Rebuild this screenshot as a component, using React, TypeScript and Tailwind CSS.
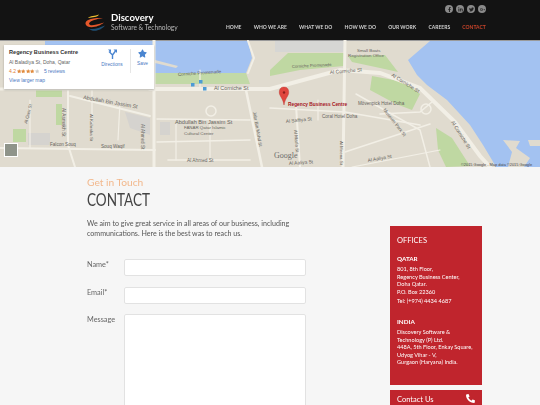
import { FaFacebookF, FaLinkedinIn, FaTwitter, FaGooglePlusG, FaPhoneAlt, FaStar } from 'react-icons/fa';

const navItems = ['HOME', 'WHO WE ARE', 'WHAT WE DO', 'HOW WE DO', 'OUR WORK', 'CAREERS'];

const mapLabels: { t: string; x: number; y: number; r?: number; s?: number }[] = [
  { t: 'Corniche Promenade', x: 178, y: 36, r: -4, s: 4.6 },
  { t: 'Al Corniche St', x: 214, y: 50, s: 5.4 },
  { t: 'Abdullah Bin Jassim St', x: 83, y: 59, r: 10, s: 5.4 },
  { t: 'Abdullah Bin Jassim St', x: 175, y: 84, s: 5.6 },
  { t: 'FANAR Qatar Islamic', x: 184, y: 89, s: 4.4 },
  { t: 'Cultural Center', x: 184, y: 95, s: 4.4 },
  { t: 'Al Asmakh St', x: 62, y: 68, r: 90, s: 4.8 },
  { t: 'Al Kahraba St', x: 90, y: 74, r: 90, s: 4.4 },
  { t: 'Al Ahmed St', x: 141, y: 84, r: 90, s: 4.6 },
  { t: 'Al Qasr St', x: 27, y: 84, r: -75, s: 4.4 },
  { t: 'Falcon Souq', x: 50, y: 106, s: 4.6 },
  { t: 'Souq Waqif', x: 101, y: 108, s: 4.6 },
  { t: 'Al Ahmed St', x: 187, y: 122, s: 4.8 },
  { t: 'Jabr Bin Mohd St', x: 253, y: 72, r: 80, s: 4.6 },
  { t: 'Small Boats', x: 357, y: 12, s: 4.4 },
  { t: 'Registration Office', x: 348, y: 17, s: 4.4 },
  { t: 'Corniche Promenade', x: 292, y: 28, r: -3, s: 4.2 },
  { t: 'Al Corniche St', x: 330, y: 34, r: -5, s: 5 },
  { t: 'Al Corniche St', x: 391, y: 36, r: 32, s: 5 },
  { t: 'Al Corniche St', x: 451, y: 82, r: 58, s: 5 },
  { t: 'Mövenpick Hotel Doha', x: 358, y: 65, s: 4.6 },
  { t: 'Coral Hotel Doha', x: 322, y: 78, s: 4.6 },
  { t: 'Museum Park St', x: 383, y: 70, r: 52, s: 4.6 },
  { t: 'Al Saffiya St', x: 286, y: 83, r: -6, s: 4.8 },
  { t: 'Al Marfa St', x: 294, y: 90, r: 85, s: 4.6 },
  { t: 'Al Meena St', x: 340, y: 101, r: 90, s: 4.4 },
  { t: 'Al Aaliya St', x: 289, y: 125, r: -4, s: 4.8 },
  { t: 'Al Aaliya St', x: 368, y: 122, r: -10, s: 4.8 },
];

function MapDrawing() {
  return (
    <svg className="block h-full w-full" viewBox="0 0 540 127" fontFamily="'Liberation Sans', sans-serif">
      <rect width="540" height="127" fill="#e0dbcf" />
      <rect width="540" height="1" fill="#9a9a9a" />
      {/* water */}
      <path d="M45 1H248L252 18 246 33H150L120 28 45 10Z" fill="#a3c2f1" />
      <path d="M155 20L178 26 176 28 155 23Z" fill="#e0dbcf" />
      <path d="M430 1L408 20 417 35 427 45 447 60 470 85 483 105 492 120 496 127H540V1Z" fill="#a3c2f1" />
      <path d="M503 100L520 101 516 108 530 118 524 127H508L512 112Z" fill="#e0dbcf" />
      <path d="M528 100H540V106H530Z" fill="#e0dbcf" />
      {/* parks */}
      <path d="M155 33H246L250 44H155Z" fill="#bfd8a2" opacity="0.9" />
      <path d="M270 30L288 13H344V26L300 30 270 36Z" fill="#bfd8a2" />
      <path d="M348 16L385 15 398 32 380 28 352 22Z" fill="#bfd8a2" />
      <path d="M372 36L404 42 420 54 412 70 396 64 370 50Z" fill="#bfd8a2" />
      <path d="M436 88L452 98 470 126 446 127 438 110Z" fill="#bfd8a2" />
      <path d="M36 49H62V57H36Z" fill="#bfd8a2" />
      <path d="M56 64H62V85H56Z" fill="#bfd8a2" />
      <path d="M13 89H26V102H13Z" fill="#bfd8a2" />
      <rect x="275" y="1" width="70" height="11" fill="#d6d6d4" />
      <rect x="28" y="93" width="22" height="12" fill="#d5d3cf" />
      <rect x="160" y="82" width="10" height="13" fill="#d5d3cf" />
      <path d="M125 72L150 78V95L130 88Z" fill="#d5d3cf" />
      {/* roads */}
      <g fill="none" stroke="#f2efe6" strokeLinecap="round">
        <path d="M150 49H270L340 30 380 33 420 48 455 82 480 116 490 127" strokeWidth="4" />
        <path d="M0 49H150" strokeWidth="3" />
        <path d="M154 0V127" strokeWidth="3" />
        <path d="M345 0L343 127" strokeWidth="3" />
        <path d="M68 50V105L75 127" strokeWidth="2" />
        <path d="M70 56L150 76" strokeWidth="2" />
        <path d="M0 108L155 110" strokeWidth="2" />
        <path d="M157 79L250 80" strokeWidth="1.6" />
        <path d="M157 102L250 100" strokeWidth="1.6" />
        <path d="M246 50L262 127" strokeWidth="2.5" />
        <path d="M168 120H250" strokeWidth="1.6" />
        <path d="M176 84V120M210 84V120" strokeWidth="1.2" />
        <path d="M270 68L345 72M345 72L420 85" strokeWidth="1.6" />
        <path d="M296 65L300 127" strokeWidth="2" />
        <path d="M318 60V80" strokeWidth="1.2" />
        <path d="M345 112L430 84" strokeWidth="1.6" />
        <path d="M352 127L440 110" strokeWidth="1.2" />
        <path d="M356 54L420 90 430 127" strokeWidth="1.5" />
        <path d="M380 74L420 72 432 62" strokeWidth="1.6" />
        <path d="M92 50V85M120 62L118 100" strokeWidth="1.2" />
        <path d="M30 60V108M200 50V30" strokeWidth="1.2" />
        <path d="M248 1L254 18 248 33" strokeWidth="2" />
      </g>
      <circle cx="426" cy="69" r="5" fill="none" stroke="#f2efe6" strokeWidth="1.5" />
      <circle cx="211" cy="71" r="5" fill="none" stroke="#f2efe6" strokeWidth="1.5" />
      {/* map labels */}
      <g fill="#66645d">
        {mapLabels.map((l) => (
          <text
            key={l.t + l.x}
            x={l.x}
            y={l.y}
            fontSize={l.s ?? 4.6}
            transform={l.r ? `rotate(${l.r} ${l.x} ${l.y})` : undefined}
          >
            {l.t}
          </text>
        ))}
      </g>
      <text x="274" y="118" fontSize="8" fill="#6c6c6c" fontFamily="'Liberation Serif', serif">
        Google
      </text>
      <text x="461" y="126" fontSize="3.9" fill="#444">
        ©2015 Google - Map data ©2015 Google
      </text>
      {/* transit squares */}
      <rect x="191" y="43" width="3.5" height="3.5" fill="#4d9bd5" />
      <rect x="199" y="40" width="3.5" height="3.5" fill="#4d9bd5" />
      <rect x="203" y="47" width="3.5" height="3.5" fill="#4d9bd5" />
      {/* marker */}
      <path d="M284 47C279 47 279 52 279.5 54 280.5 57 283 59 284 65 285 59 287.5 57 288.5 54 289 52 289 47 284 47Z" fill="#e0473f" stroke="#b5302b" strokeWidth="0.4" />
      <circle cx="284" cy="52.5" r="1.2" fill="#8e1f1c" />
      <text x="288" y="66" fontSize="4.8" fontWeight="700" fill="#a5141c">
        Regency Business Centre
      </text>
    </svg>
  );
}

function Logo() {
  return (
    <svg width="21" height="18" viewBox="0 0 21 18" className="shrink-0">
      <path d="M3 4C5 1.5 10 2.5 14 0.5 12.5 3.5 7 3 3 4Z" fill="#f2c230" />
      <path d="M0.5 10C0 6 6 3.5 18 4 12 5 5 6.5 4 9.5 4.5 12 8 12 19 8.5 14 13 2.5 15.5 0.5 10Z" fill="#e4572a" />
      <path d="M3.5 14.5C8 16 14 14 20 11.5 17 15.5 9 19.5 3.5 14.5Z" fill="#1f4f73" />
    </svg>
  );
}

export default function App() {
  return (
    <div className="flex h-screen flex-col overflow-hidden bg-[#f6f6f6] font-['Lato',sans-serif]">
      <header className="flex h-10 shrink-0 justify-between bg-[#131313] pl-[85px] pr-[54px]">
        <div className="flex items-center gap-[5px] pt-[5px]">
          <Logo />
          <div className="text-white [will-change:transform]">
            <div className="text-[9.6px] leading-[10px] font-bold">Discovery</div>
            <div className="text-[6.6px] leading-[9px] text-[#b8b8b8]">Software &amp; Technology</div>
          </div>
        </div>
        <div className="flex flex-col items-end">
          <div className="mt-[5px] flex gap-[3px]">
            {[FaFacebookF, FaLinkedinIn, FaTwitter, FaGooglePlusG].map((Icon, i) => (
              <span key={i} className="flex h-[8px] w-[8px] items-center justify-center rounded-full bg-[#8a8a8a] text-[5px] text-[#222]">
                <Icon />
              </span>
            ))}
          </div>
          <nav className="mt-[11px] flex gap-[12.2px] text-[5px] leading-[7px] font-bold text-[#cfcfcf] [will-change:transform]">
            {navItems.map((n) => (
              <span key={n}>{n}</span>
            ))}
            <span className="text-[#c9442a]">CONTACT</span>
          </nav>
        </div>
      </header>

      <div className="relative h-[127px] shrink-0">
        <MapDrawing />
        <div className="absolute top-[5px] left-[4px] flex h-[44px] w-[150px] justify-between bg-white pt-[4px] pl-[5px] shadow-[0_1px_2px_rgba(0,0,0,0.25)]">
          <div className="font-['Liberation_Sans',sans-serif]">
            <div className="text-[5.6px] leading-[7px] font-bold text-[#333]">Regency Business Centre</div>
            <div className="mt-[3px] text-[5px] leading-[6px] text-[#666]">Al Baladiya St, Doha, Qatar</div>
            <div className="mt-[3px] flex items-center text-[5px] leading-[7px]">
              <span className="mr-[1px] text-[#dd7b33]">4.2</span>
              <span className="flex text-[4.4px] text-[#e08a3c]">
                <FaStar /><FaStar /><FaStar /><FaStar /><FaStar className="text-[#ccc]" />
              </span>
              <span className="ml-[5px] text-[#4a78c2]">5 reviews</span>
            </div>
            <div className="mt-[2px] text-[5px] leading-[7px] text-[#4a78c2]">View larger map</div>
          </div>
          <div className="flex font-['Liberation_Sans',sans-serif] text-[4.8px] text-[#4a78c2]">
            <div className="mr-[3px] flex w-[30px] flex-col items-center">
              <svg width="9" height="10" viewBox="0 0 9 10">
                <path d="M4.5 10V6L1 2.5M4.5 6L7.5 2" fill="none" stroke="#4a85d0" strokeWidth="1.4" />
                <path d="M5.5 0.5H9V4Z M0 0.5H3V3.5Z" fill="#4a85d0" />
              </svg>
              <span className="mt-[2px] leading-[7px]">Directions</span>
            </div>
            <div className="flex h-[24px] w-[24px] flex-col items-center border-l border-[#e6e6e6]">
              <FaStar className="text-[9px] text-[#4a85d0]" />
              <span className="mt-[2px] leading-[7px]">Save</span>
            </div>
          </div>
        </div>
        <div className="absolute top-[103px] left-[4px] h-[14px] w-[14px] border border-white bg-[#8f948a]" />
      </div>

      <main className="flex flex-1 pl-[87px]">
        <div className="w-[219px] shrink-0 [will-change:transform]">
          <div className="mt-[8px] text-[10.2px] leading-[14px] text-[#f2b88c]">Get in Touch</div>
          <h1 className="mt-[1px] origin-left scale-x-[0.82] text-[16.5px] leading-[20px] text-[#444]">CONTACT</h1>
          <p className="mt-[9px] text-[7.1px] leading-[9.5px] text-[#555]">
            We aim to give great service in all areas of our business, including communications. Here is the best was to reach us.
          </p>
          <form className="mt-[21px] flex flex-col gap-[10.5px] text-[7.3px] text-[#666]">
            <label className="flex gap-[21px]">
              <span className="w-[16px] shrink-0 pt-[1px] leading-[10px]">Name*</span>
              <span className="h-[17px] flex-1 rounded-[2px] border border-[#e2e2e2] bg-white" />
            </label>
            <label className="flex gap-[21px]">
              <span className="w-[16px] shrink-0 pt-[1px] leading-[10px]">Email*</span>
              <span className="h-[17px] flex-1 rounded-[2px] border border-[#e2e2e2] bg-white" />
            </label>
            <label className="flex gap-[21px]">
              <span className="w-[16px] shrink-0 pt-[1px] leading-[10px]">Message</span>
              <span className="h-[120px] flex-1 rounded-[2px] border border-[#e2e2e2] bg-white" />
            </label>
          </form>
        </div>

        <aside className="ml-[84px] w-[92px] shrink-0 pt-[59px] text-white [will-change:transform]">
          <div className="h-[159px] bg-[#c0252d] pt-[9px] pl-[7px] text-[5.6px] leading-[7.6px]">
            <div className="text-[7.5px] leading-[11px]">OFFICES</div>
            <div className="mt-[9px] text-[6.3px] leading-[8px] font-bold">QATAR</div>
            <div className="mt-[2px]">801, 8th Floor,<br />Regency Business Center,<br />Doha  Qatar.<br />P.O. Box 22360</div>
            <div className="mt-[2px]">Tel: (+974) 4434 4687</div>
            <div className="mt-[13px] text-[6.3px] leading-[8px] font-bold">INDIA</div>
            <div className="mt-[2px]">Discovery Software &amp;<br />Technology (P) Ltd.<br />448A, 5th Floor, Enkay Square,<br />Udyog Vihar - V,<br />Gurgaon (Haryana) India.</div>
          </div>
          <div className="mt-[5px] flex h-[30px] justify-between bg-[#c0252d] pt-[4px] pr-[7px] pl-[7px] text-[7.5px] leading-[12px]">
            <span>Contact Us</span>
            <FaPhoneAlt className="text-[9px]" />
          </div>
        </aside>
      </main>
    </div>
  );
}
